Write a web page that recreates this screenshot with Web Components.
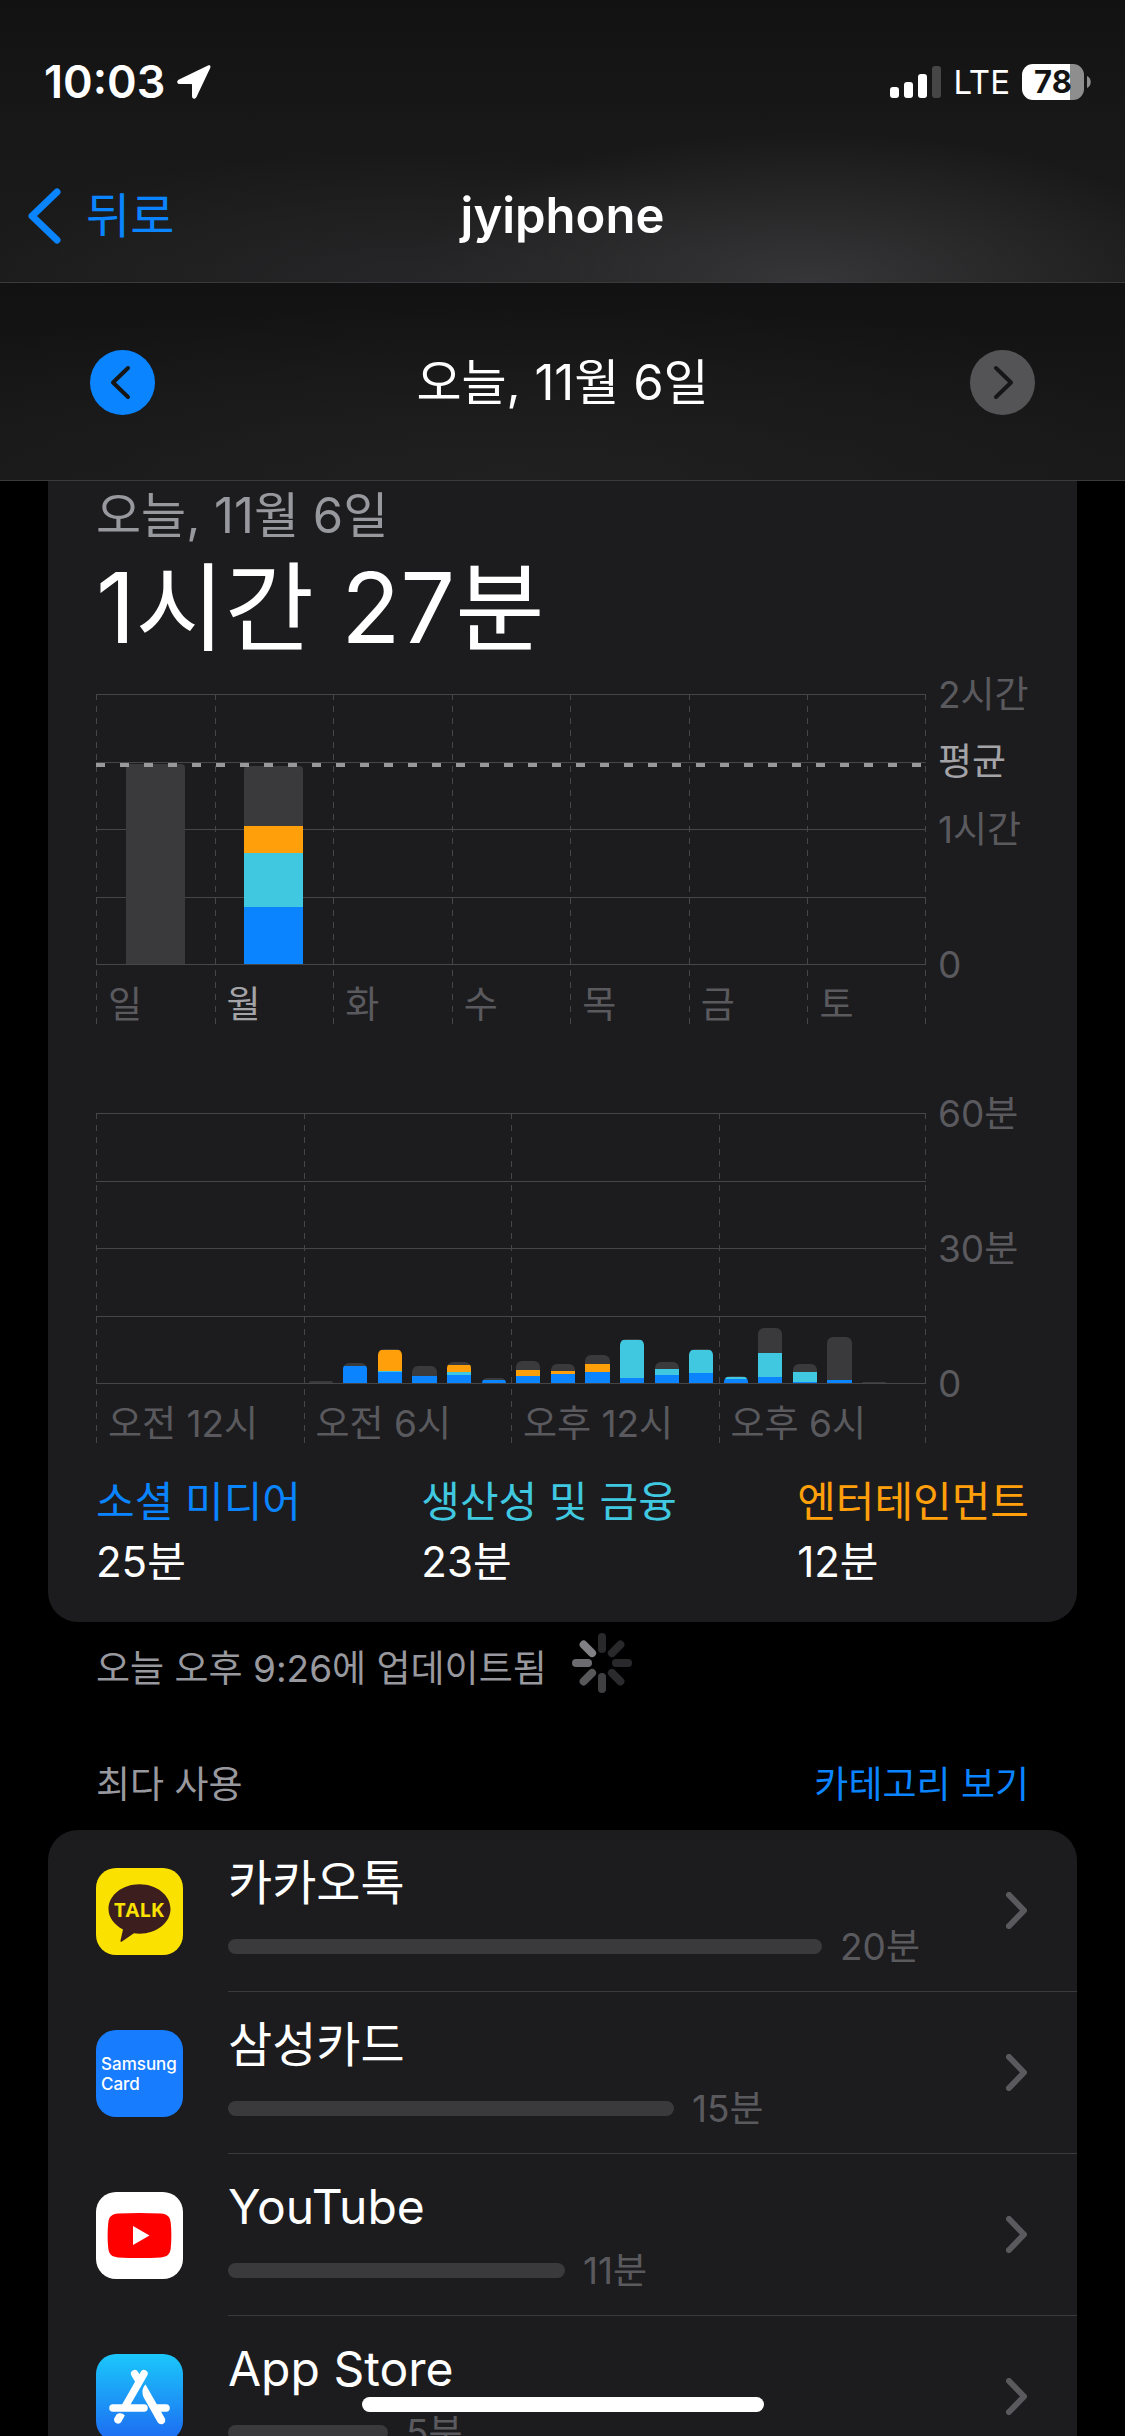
<!DOCTYPE html>
<html lang="ko">
<head>
<meta charset="utf-8">
<meta name="viewport" content="width=device-width">
<title>jyiphone</title>
<style>
	html {
		background: #000;
	}
	body {
		margin: 0;
		color: #fff;
		font-family: Inter, "Noto Sans CJK KR", sans-serif;
		--blue: #0a84ff;
		--teal: #40c8e0;
		--orange: #ff9f0a;
		--other: #3a3a3c;
		--card: #1c1c1e;
		--line: #464649;
		--secondary: #98989f;
		--tertiary: #5a5a5e;
	}
</style>
</head>
<body>
<screen-time>
	<status-bar slot="header" time="10:03" network="LTE" battery="78"></status-bar>
	<nav-bar slot="header" back="뒤로">jyiphone</nav-bar>
	<date-switcher slot="header">오늘, 11월 6일</date-switcher>

	<usage-card>
		<span slot="date">오늘, 11월 6일</span>
		<span slot="total">1시간 27분</span>
		<usage-chart id="week"></usage-chart>
		<usage-chart id="day"></usage-chart>
		<usage-category slot="legend" color="blue" time="25분">소셜 미디어</usage-category>
		<usage-category slot="legend" color="teal" time="23분">생산성 및 금융</usage-category>
		<usage-category slot="legend" color="orange" time="12분">엔터테인먼트</usage-category>
	</usage-card>
	<update-note>오늘 오후 9:26에 업데이트됨</update-note>

	<app-list heading="최다 사용" action="카테고리 보기">
		<app-row name="카카오톡" time="20분" share="594"><app-icon slot="icon" name="talk"></app-icon></app-row>
		<app-row name="삼성카드" time="15분" share="446"><app-icon slot="icon" name="card"></app-icon></app-row>
		<app-row name="YouTube" time="11분" share="337"><app-icon slot="icon" name="youtube"></app-icon></app-row>
		<app-row name="App Store" time="5분" share="160"><app-icon slot="icon" name="store"></app-icon></app-row>
	</app-list>
</screen-time>

<script>
// Small base: every element renders its template once when it is attached.
class BaseElement extends HTMLElement {
	constructor() {
		super();
		this.attachShadow({ mode: "open" });
	}

	connectedCallback() {
		this.render();
	}

	attr(name) {
		return this.getAttribute(name) || "";
	}
}

// Page shell: fixed header block, scrolling content, home indicator.
class ScreenTime extends BaseElement {
	render() {
		this.shadowRoot.innerHTML = `
			<style>
				:host { display: flex; flex-direction: column; height: 100vh; overflow: hidden; background: #000; }
				header { flex: none; }
				main { flex: 1; min-height: 0; overflow-y: auto; scrollbar-width: none; padding: 0 48px; }
				.home {
					position: fixed; left: 50%; bottom: 24px; transform: translateX(-50%);
					width: 402px; height: 15px; border-radius: 8px; background: #fff;
				}
			</style>
			<header><slot name="header"></slot></header>
			<main><slot></slot></main>
			<div class="home"></div>
		`;
	}
}

class StatusBar extends BaseElement {
	render() {
		this.shadowRoot.innerHTML = `
			<style>
				:host {
					display: flex; align-items: center; justify-content: space-between;
					height: 132px; padding: 32px 34px 0 44px; box-sizing: border-box;
					background: linear-gradient(#121212, #181818);
				}
				div { display: flex; align-items: center; }
				.left { gap: 12px; font-size: 45px; font-weight: 600; line-height: 56px; }
				.right { gap: 12px; font-size: 33px; line-height: 44px; }
				svg { display: block; }
				.battery { gap: 3px; }
				.cell {
					justify-content: center; width: 62px; height: 36px; border-radius: 11px;
					background: linear-gradient(90deg, #fff 78%, #8e8e8e 78%);
					color: #141414; font-size: 31px; font-weight: 700; line-height: 36px;
				}
			</style>
			<div class="left">
				<span>${this.attr("time")}</span>
				<svg width="34" height="34" viewBox="0 0 34 34" fill="#fff"><path d="M31 .5 2 14.5C-.8 16-.2 19 3 19h11c.8 0 1 .3 1 1v11c0 3.200 3 3.800 4.500 1L33.200 3C34 1 33 0 31 .5z"/></svg>
			</div>
			<div class="right">
				<svg width="51" height="32" viewBox="0 0 51 32" fill="#fff">
					<rect y="21" width="9" height="11" rx="3"/>
					<rect x="14" y="16" width="9" height="16" rx="3"/>
					<rect x="28" y="8" width="9" height="24" rx="3"/>
					<rect x="42" width="9" height="32" rx="3" fill="#464646"/>
				</svg>
				<span>${this.attr("network")}</span>
				<div class="battery">
					<div class="cell">${this.attr("battery")}</div>
					<svg width="4" height="12" viewBox="0 0 4 12"><path d="M0 0c5 2 5 10 0 12z" fill="#8e8e8e"/></svg>
				</div>
			</div>
		`;
	}
}

class NavBar extends BaseElement {
	render() {
		this.shadowRoot.innerHTML = `
			<style>
				:host {
					display: grid; grid-template-columns: 1fr auto 1fr; align-items: center;
					height: 151px; padding: 18px 27px 0; box-sizing: border-box;
					border-bottom: 1px solid #3a3a3c;
					background:
						radial-gradient(400px 150px at 72% 100%, #363638, #36363800),
						radial-gradient(460px 130px at 36% 100%, #262628, #26262800),
						linear-gradient(#181818, #1b1b1b);
				}
				a { display: flex; align-items: center; gap: 25px; color: var(--blue); font-size: 48px; line-height: 60px; text-decoration: none; }
				h1 { margin: 0; font-size: 49px; font-weight: 600; line-height: 60px; }
			</style>
			<a href="#back">
				<svg width="34" height="56" viewBox="0 0 34 56" fill="none" stroke="currentColor" stroke-width="7" stroke-linecap="round" stroke-linejoin="round"><path d="M30 4 5 28l25 24"/></svg>
				${this.attr("back")}
			</a>
			<h1><slot></slot></h1>
		`;
	}
}

class DateSwitcher extends BaseElement {
	render() {
		this.shadowRoot.innerHTML = `
			<style>
				:host {
					display: flex; align-items: center; justify-content: space-between;
					height: 198px; padding: 2px 90px 0; box-sizing: border-box;
					border-bottom: 1px solid #3a3a3c;
					background: radial-gradient(800px 180px at 45% 100%, #202020, #20202000), linear-gradient(#121212, #181818);
				}
				button { width: 65px; height: 65px; padding: 0; border: 0; border-radius: 50%; background: var(--blue); }
				button:disabled { background: #545456; }
				svg { display: block; margin: auto; }
				span { font-size: 49px; line-height: 60px; }
			</style>
			<button aria-label="이전 날">
				<svg width="65" height="65" viewBox="0 0 65 65" fill="none" stroke="#161616" stroke-width="4" stroke-linecap="round" stroke-linejoin="round"><path d="M38 18 23 32.500l15 14.500"/></svg>
			</button>
			<span><slot></slot></span>
			<button aria-label="다음 날" disabled>
				<svg width="65" height="65" viewBox="0 0 65 65" fill="none" stroke="#161616" stroke-width="4" stroke-linecap="round" stroke-linejoin="round"><path d="M26 18l15 14.500L26 47"/></svg>
			</button>
		`;
	}
}

class UsageCard extends BaseElement {
	render() {
		this.shadowRoot.innerHTML = `
			<style>
				:host {
					display: block; padding: 5px 48px 30px;
					border-radius: 0 0 30px 30px; background: var(--card);
				}
				.date { color: var(--secondary); font-size: 49px; line-height: 60px; }
				.total { margin: 6px 0 30px; font-size: 97px; line-height: 112px; }
				.charts { display: flex; flex-direction: column; gap: 88px; }
				.legend { display: flex; justify-content: space-between; margin-top: 28px; }
			</style>
			<div class="date"><slot name="date"></slot></div>
			<div class="total"><slot name="total"></slot></div>
			<div class="charts"><slot></slot></div>
			<div class="legend"><slot name="legend"></slot></div>
		`;
	}
}

class UsageCategory extends BaseElement {
	render() {
		this.shadowRoot.innerHTML = `
			<style>
				:host { display: block; font-size: 42px; line-height: 60px; }
				.name { color: var(--${this.attr("color")}); }
			</style>
			<div class="name"><slot></slot></div>
			<div>${this.attr("time")}</div>
		`;
	}
}

// Stacked bar chart. Set .data to:
// - columns: labels under the plot, one per dashed column
// - active: index of the highlighted label
// - axis: [text, row, highlighted] with row 1 (top) to 5 (zero line)
// - bars: [blue, teal, orange, other] heights, one entry per bar
// - width: bar width within its slot
// - average: height of the dotted line
class UsageChart extends BaseElement {
	set data(value) {
		this._data = value;
		if (this.isConnected) this.render();
	}

	render() {
		if (!this._data) return;
		const { columns, active, axis, bars, width, radius, average } = this._data;
		const colors = ["blue", "teal", "orange", "other"];

		let barsHtml = "";
		for (const bar of bars) {
			let segments = "";
			bar.forEach((height, i) => {
				if (height) segments = `<i style="height: ${height}px; background: var(--${colors[i]})"></i>` + segments;
			});
			barsHtml += `<div class="slot"><div class="bar">${segments}</div></div>`;
		}

		this.shadowRoot.innerHTML = `
			<style>
				:host { display: grid; grid-template-columns: 1fr 103px; height: 331px; font-size: 37px; line-height: 44px; color: var(--tertiary); }
				.plot { display: grid; align-items: start; min-width: 0; }
				.plot > * { grid-area: 1 / 1; }
				.rules { display: flex; flex-direction: column; justify-content: space-between; height: 271px; }
				.rules i { height: 1px; background: var(--line); }
				.columns { display: grid; grid-template-columns: repeat(${columns.length}, 1fr); height: 331px; }
				.columns, .columns span {
					background: repeating-linear-gradient(var(--line) 0 6px, transparent 6px 12px) left / 1px 100% no-repeat;
				}
				.columns { background-position: right; }
				.columns span { box-sizing: border-box; padding: 289px 0 0 12px; white-space: nowrap; }
				.columns .active, .axis .active { color: #a4a4a8; }
				.bars { display: grid; grid-template-columns: repeat(${bars.length}, 1fr); align-items: end; height: 270px; }
				.bar { width: ${width}; margin: 0 auto; border-radius: ${radius}px ${radius}px 0 0; overflow: hidden; }
				.bar i { display: block; }
				.average {
					height: 4px; margin-top: ${270 - average}px;
					background: repeating-linear-gradient(90deg, #98989d 0 9px, transparent 9px 24px);
				}
				.axis { display: grid; grid-template-rows: repeat(5, 1fr); align-items: center; height: 338px; margin-top: -33px; padding-left: 12px; white-space: nowrap; }
			</style>
			<div class="plot">
				<div class="rules"><i></i><i></i><i></i><i></i><i></i></div>
				<div class="columns">${columns.map((c, i) => `<span class="${i === active ? "active" : ""}">${c}</span>`).join("")}</div>
				<div class="bars">${barsHtml}</div>
				${average ? `<div class="average"></div>` : ""}
			</div>
			<div class="axis">${axis.map(([text, row, on]) => `<span class="${on ? "active" : ""}" style="grid-row: ${row}">${text}</span>`).join("")}</div>
		`;
	}
}

class UpdateNote extends BaseElement {
	render() {
		const shades = ["#29292b", "#29292b", "#29292b", "#2b2b2d", "#404042", "#58585b", "#6c6c70", "#808085"];
		const spokes = shades
			.map((c, i) => `<path d="M30 4v12" stroke="${c}" transform="rotate(${i * 45} 30 30)"/>`)
			.join("");
		this.shadowRoot.innerHTML = `
			<style>
				:host { display: flex; align-items: flex-end; gap: 25px; padding: 11px 48px 0; color: var(--secondary); font-size: 37px; line-height: 48px; }
				svg { display: block; }
			</style>
			<span><slot></slot></span>
			<svg width="60" height="60" viewBox="0 0 60 60" stroke-width="8" stroke-linecap="round">${spokes}</svg>
		`;
	}
}

class AppList extends BaseElement {
	render() {
		this.shadowRoot.innerHTML = `
			<style>
				:host { display: block; margin-top: 70px; }
				header { display: flex; justify-content: space-between; padding: 0 48px; font-size: 37px; line-height: 44px; }
				h2 { margin: 0; color: var(--secondary); font: inherit; }
				a { color: var(--blue); text-decoration: none; }
				.rows { margin-top: 23px; border-radius: 30px; background: var(--card); overflow: hidden; }
			</style>
			<header><h2>${this.attr("heading")}</h2><a href="#categories">${this.attr("action")}</a></header>
			<div class="rows"><slot></slot></div>
		`;
	}
}

class AppRow extends BaseElement {
	render() {
		this.shadowRoot.innerHTML = `
			<style>
				:host { display: block; }
				a { display: flex; gap: 45px; height: 162px; padding-left: 48px; color: inherit; text-decoration: none; }
				.icon { display: flex; align-items: center; }
				.body { flex: 1; display: flex; align-items: center; border-bottom: 1px solid #3a3a3c; padding-right: 50px; }
				.info { flex: 1; }
				.name { font-size: 48px; line-height: 60px; }
				.usage { display: flex; align-items: center; gap: 18px; margin-top: 12px; color: var(--tertiary); font-size: 37px; line-height: 44px; }
				.meter { width: ${this.attr("share")}px; height: 15px; border-radius: 8px; background: var(--other); }
				svg { display: block; }
			</style>
			<a href="#${encodeURIComponent(this.attr("name"))}">
				<div class="icon"><slot name="icon"></slot></div>
				<div class="body">
					<div class="info">
						<div class="name">${this.attr("name")}</div>
						<div class="usage"><div class="meter"></div>${this.attr("time")}</div>
					</div>
					<svg width="21" height="37" viewBox="0 0 21 37" fill="none" stroke="#5a5a5e" stroke-width="6" stroke-linecap="round" stroke-linejoin="round"><path d="M3 3l15 15.500L3 34"/></svg>
				</div>
			</a>
		`;
	}
}

const ICONS = {
	talk: `
		<rect width="87" height="87" rx="20" fill="#fae100"/>
		<path d="M43.500 16.300c17.100 0 31 11 31 24.700s-13.900 24.700-31 24.700c-2 0-3.800-.1-5.600-.4L26 73.500c-1 .7-1.700.2-1.500-1L27 61.500C18.500 57 12.500 49.500 12.500 41c0-13.700 13.900-24.700 31-24.700z" fill="#3c1e1e"/>
		<text x="43" y="49" text-anchor="middle" font-family="Open Sans" font-size="20" font-weight="700" fill="#fae100">TALK</text>`,
	card: `
		<rect width="87" height="87" rx="20" fill="#187cff"/>
		<text x="5" y="40" font-size="17" font-weight="500" fill="#fff">Samsung</text>
		<text x="5" y="60" font-size="17" font-weight="500" fill="#fff">Card</text>`,
	youtube: `
		<rect width="87" height="87" rx="20" fill="#fff"/>
		<path d="M22 21.600c14-.9 29-.9 43 0 6 .4 9 3 9.700 9 .9 8 .9 18 0 26-.7 6-3.700 8.400-9.700 8.800-14 .9-29 .9-43 0-6-.4-9-2.800-9.700-8.800-.9-8-.9-18 0-26 .7-6 3.700-8.600 9.700-9z" fill="red"/>
		<path d="M37 34v19l16.500-9.500z" fill="#fff"/>`,
	store: `
		<defs><linearGradient id="sky" x2="0" y2="1"><stop stop-color="#1bc8fb"/><stop offset="1" stop-color="#1d6af2"/></linearGradient></defs>
		<rect width="87" height="87" rx="20" fill="url(#sky)"/>
		<g fill="none" stroke="#fff" stroke-width="7.500" stroke-linecap="round">
			<path d="M38.700 19.700l4.500 7.500M48 19.700 30 51"/>
			<path d="M17 54h31M60 54h10"/>
		</g>
		<path d="M49.500 30.500c-4 4-3.600 9.500-1.500 13.500l13.500 24c3 4.500 9.500 1.500 7.300-3.800z" fill="#fff"/>
		<path d="M20.500 60.500c2-1.800 6-2 8.300 1l-3.600 6.500c-2.500 3.500-8 1-7-3.500z" fill="#fff"/>`,
};

class AppIcon extends BaseElement {
	render() {
		this.shadowRoot.innerHTML = `
			<style>
				:host { display: block; width: 87px; height: 87px; }
				svg { display: block; }
			</style>
			<svg width="87" height="87" viewBox="0 0 87 87">${ICONS[this.attr("name")]}</svg>
		`;
	}
}

customElements.define("screen-time", ScreenTime);
customElements.define("status-bar", StatusBar);
customElements.define("nav-bar", NavBar);
customElements.define("date-switcher", DateSwitcher);
customElements.define("usage-card", UsageCard);
customElements.define("usage-category", UsageCategory);
customElements.define("usage-chart", UsageChart);
customElements.define("update-note", UpdateNote);
customElements.define("app-list", AppList);
customElements.define("app-row", AppRow);
customElements.define("app-icon", AppIcon);

document.getElementById("week").data = {
	columns: ["일", "월", "화", "수", "목", "금", "토"],
	active: 1,
	axis: [["2시간", 1], ["평균", 2, true], ["1시간", 3], ["0", 5]],
	bars: [[0, 0, 0, 200], [57, 54, 27, 60], [], [], [], [], []],
	width: "50%",
	radius: 4,
	average: 201,
};

document.getElementById("day").data = {
	columns: ["오전 12시", "오전 6시", "오후 12시", "오후 6시"],
	axis: [["60분", 1], ["30분", 3], ["0", 5]],
	bars: [
		[], [], [], [], [], [],
		[0, 0, 0, 2], [17, 0, 0, 3], [11, 1, 21, 1], [7, 0, 0, 10], [8, 3, 7, 3], [3, 0, 0, 2],
		[7, 0, 6, 9], [9, 0, 3, 7], [11, 0, 8, 9], [5, 38, 0, 1], [8, 6, 0, 7], [10, 23, 0, 1],
		[4, 2, 0, 1], [6, 24, 0, 25], [1, 10, 0, 8], [3, 0, 0, 43], [0, 0, 0, 1], [],
	],
	width: "70%",
	radius: 6,
};
</script>
</body>
</html>
